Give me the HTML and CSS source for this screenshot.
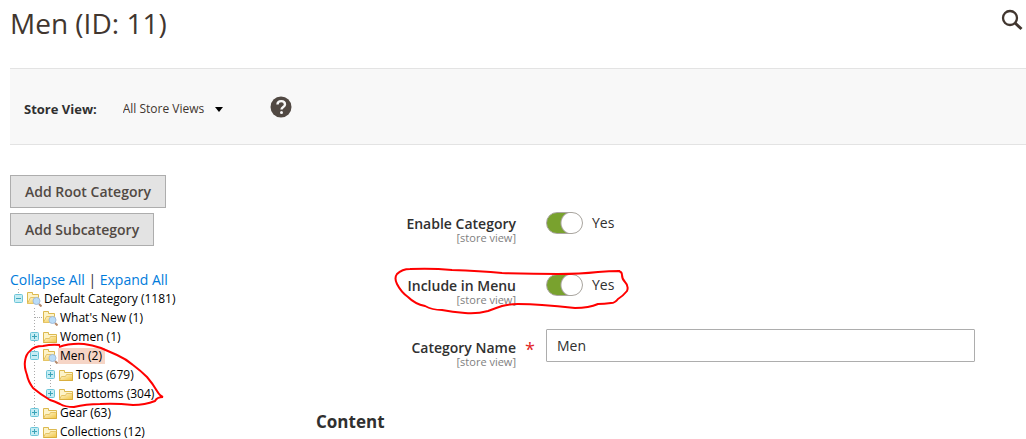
FILE: index.html
```html
<!DOCTYPE html>
<html lang="en">
<head>
    <meta charset="UTF-8">
    <meta name="viewport" content="width=device-width, initial-scale=1.0">
    <title>Men (ID: 11) / Categories</title>
    <link rel="stylesheet" href="styles.css">
</head>
<body>
    <!-- Shared icons -->
    <svg class="sprite" aria-hidden="true">
        <defs>
            <linearGradient id="gold" x1="0" y1="0" x2="1" y2="1">
                <stop offset="0" stop-color="#fff8d8"/>
                <stop offset="1" stop-color="#f0c441"/>
            </linearGradient>
            <symbol id="folder" viewBox="0 0 16 16">
                <path d="M1.500 13.500v-10h5v2h8v8z" fill="#fdf3c8" stroke="#dcb94f"/>
                <path d="M1.500 13.500l2-4h4l1-2h6v6z" fill="url(#gold)" stroke="#e6c566"/>
                <path d="M1.500 13.500h13v-6" fill="none" stroke="#d9ae3e"/>
            </symbol>
            <symbol id="folder-search" viewBox="0 0 16 16">
                <path d="M1.500 12.500v-11h5v2h6v9z" fill="#fdf3c8" stroke="#dcb94f"/>
                <path d="M1.500 12.500l3-6h8v6z" fill="url(#gold)" stroke="#e6c566"/>
                <path d="M13 13l2.500 2.500" stroke="#b58a6c" stroke-width="2"/>
                <circle cx="10.500" cy="10" r="3.500" fill="#b9dcf8" stroke="#a3bcd8"/>
            </symbol>
            <symbol id="minus" viewBox="0 0 9 9">
                <rect x="0.500" y="0.500" width="8" height="8" rx="1" fill="#c5ecf3" stroke="#6cc5d8"/>
                <path d="M2 4.500h5" stroke="#3aa3b8"/>
            </symbol>
            <symbol id="plus" viewBox="0 0 9 9">
                <rect x="0.500" y="0.500" width="8" height="8" rx="1" fill="#c5ecf3" stroke="#6cc5d8"/>
                <path d="M2 4.500h5M4.500 2v5" stroke="#3aa3b8"/>
            </symbol>
        </defs>
    </svg>

    <header class="page-header">
        <h1>Men (ID: 11)</h1>
        <button class="search" type="button" aria-label="Search">
            <svg width="22" height="22" viewBox="0 0 22 22" fill="none" stroke="#41362f">
                <circle cx="9" cy="9" r="7" stroke-width="2.300"/>
                <path d="M14 14l6.500 6" stroke-width="3"/>
            </svg>
        </button>
    </header>

    <div class="store-bar">
        <label for="store">Store View:</label>
        <div class="store-switcher">
            <select id="store">
                <option>All Store Views</option>
            </select>
            <svg class="caret" width="8" height="5" viewBox="0 0 8 5"><path d="M0 0h8l-4 5z"/></svg>
        </div>
        <a class="help" href="#" aria-label="Help">
            <svg width="22" height="22" viewBox="0 0 22 22">
                <circle cx="11" cy="11" r="10.500" fill="#514943"/>
                <path d="M7.500 8.500c0-4.500 7.500-4.500 7.500 0c0 2.500-3.500 2.500-3.500 5" fill="none" stroke="#f8f8f8" stroke-width="2.400"/>
                <circle cx="11.500" cy="16.500" r="1.500" fill="#f8f8f8"/>
            </svg>
        </a>
    </div>

    <main class="content">
        <aside class="sidebar">
            <button class="button" type="button">Add Root Category</button>
            <button class="button" type="button">Add Subcategory</button>

            <div class="tree-actions">
                <a href="#">Collapse All</a> | <a href="#">Expand All</a>
            </div>

            <div class="tree">
                <div class="node root">
                    <svg class="toggle"><use href="#minus"/></svg>
                    <svg class="icon"><use href="#folder-search"/></svg>
                    <a href="#">Default Category (1181)</a>
                </div>
                <div class="children">
                    <div class="node leaf">
                        <svg class="icon"><use href="#folder-search"/></svg>
                        <a href="#">What's New (1)</a>
                    </div>
                    <div class="node">
                        <svg class="toggle"><use href="#plus"/></svg>
                        <svg class="icon"><use href="#folder"/></svg>
                        <a href="#">Women (1)</a>
                    </div>
                    <div class="node">
                        <svg class="toggle"><use href="#minus"/></svg>
                        <svg class="icon"><use href="#folder-search"/></svg>
                        <a class="selected" href="#">Men (2)</a>
                    </div>
                    <div class="children">
                        <div class="node">
                            <svg class="toggle"><use href="#plus"/></svg>
                            <svg class="icon"><use href="#folder"/></svg>
                            <a href="#">Tops (679)</a>
                        </div>
                        <div class="node">
                            <svg class="toggle"><use href="#plus"/></svg>
                            <svg class="icon"><use href="#folder"/></svg>
                            <a href="#">Bottoms (304)</a>
                        </div>
                    </div>
                    <div class="node">
                        <svg class="toggle"><use href="#plus"/></svg>
                        <svg class="icon"><use href="#folder"/></svg>
                        <a href="#">Gear (63)</a>
                    </div>
                    <div class="node">
                        <svg class="toggle"><use href="#plus"/></svg>
                        <svg class="icon"><use href="#folder"/></svg>
                        <a href="#">Collections (12)</a>
                    </div>
                </div>
                <svg class="mark mark-tree" viewBox="20 340 150 70" aria-hidden="true">
                    <path d="M59 347Q70 343 84 344Q92 345 101 348L117 355Q126 359 133 365Q141 371 147 377Q153 384 157 391Q160 396 163 397Q157 397 155 401Q145 405 133 405Q115 403 100 404Q86 404 74 407Q65 407 60 404Q54 401 50 400Q40 394 33 388Q28 381 27 375Q24 367 25 361Q26 354 30 351Q34 346 43 346Q52 344 60 345"/>
                </svg>
            </div>
        </aside>

        <form class="form">
            <div class="field">
                <label for="enable">Enable Category<small>[store view]</small></label>
                <div class="control">
                    <input class="switch" id="enable" type="checkbox" checked>
                    <span>Yes</span>
                </div>
            </div>
            <div class="field">
                <label for="menu">Include in Menu<small>[store view]</small></label>
                <div class="control">
                    <input class="switch" id="menu" type="checkbox" checked>
                    <span>Yes</span>
                </div>
                <svg class="mark mark-field" viewBox="390 265 245 52" aria-hidden="true">
                    <path d="M617 271Q622 271 622 275Q622 279 625 282Q629 286 627 291Q623 296 618 299Q615 303 611 303Q604 304 598 304Q589 308 575 308Q557 306 542 305Q530 304 518 304Q508 304 502 306Q496 308 488 311Q477 314 465 313Q452 312 442 310Q432 310 425 306Q415 304 408 297Q401 292 397 284Q394 278 397 274Q402 269 410 269Q432 268 452 270Q480 271 502 273Q532 274 558 274Q580 274 598 272Q609 271 620 271"/>
                </svg>
            </div>
            <div class="field required">
                <label for="name">Category Name<small>[store view]</small></label>
                <div class="control">
                    <input class="text" id="name" type="text" value="Men">
                </div>
            </div>
            <h2>Content</h2>
        </form>
    </main>
</body>
</html>
```

FILE: styles.css
```css
* {
    box-sizing: border-box;
}
body {
    margin: 0;
    font-family: "Open Sans", "Noto Sans", sans-serif;
    font-size: 14px;
    line-height: 20px;
    color: #303030;
    background: #fff;
}
button, input, select {
    font: inherit;
}
a {
    color: #007bdb;
    text-decoration: none;
}
svg {
    display: block;
}
.sprite {
    position: absolute;
    width: 0;
    height: 0;
}

/* Header */
.page-header {
    display: flex;
    align-items: flex-start;
    justify-content: space-between;
    height: 68px;
    padding: 3px 3px 0 10px;
}
.page-header h1 {
    margin: 0;
    font-size: 28px;
    font-weight: 400;
    line-height: 40px;
    color: #41362f;
}
.search {
    margin-top: 6px;
    padding: 0;
    border: none;
    background: none;
    cursor: pointer;
}

/* Store view bar */
.store-bar {
    display: flex;
    align-items: center;
    height: 77px;
    margin-left: 10px;
    padding: 4px 14px 0;
    border-top: 1px solid #e3e3e3;
    border-bottom: 1px solid #e3e3e3;
    background: #f8f8f8;
}
.store-bar label {
    font-size: 13px;
    font-weight: 700;
}
.store-switcher {
    position: relative;
    margin-left: 26px;
}
.store-switcher select {
    padding: 0 18px 0 0;
    border: none;
    background: none;
    appearance: none;
    font-size: 12px;
    color: #41362f;
}
.caret {
    position: absolute;
    top: 9px;
    right: 0;
    pointer-events: none;
}
.help {
    margin: 0 0 4px 47px;
}

/* Columns */
.content {
    display: flex;
    padding: 30px 51px 0 10px;
}
.sidebar {
    flex: 0 0 306px;
}
.button {
    display: block;
    height: 33px;
    margin-bottom: 5px;
    padding: 0 14px;
    border: 1px solid #adadad;
    background: #e3e3e3;
    font-weight: 600;
    color: #514943;
    cursor: pointer;
}
.tree-actions {
    margin-top: 25px;
    line-height: 18px;
}

/* Category tree */
.tree {
    position: relative;
    font-size: 12px;
    line-height: 16px;
}
.node {
    display: flex;
    align-items: center;
    height: 19px;
    padding-left: 4px;
}
.node a {
    padding: 0 3px 0 2px;
    color: #000;
}
.node a.selected {
    background: #f6d5c6;
}
.toggle {
    width: 9px;
    height: 9px;
    margin-right: 3px;
}
.icon {
    width: 16px;
    height: 16px;
}
.root {
    background: repeating-linear-gradient(#aaa 0 1px, transparent 1px 3px) 8px 0 / 1px 5px no-repeat;
}
.leaf::before {
    content: "";
    width: 8px;
    margin: 0 0 0 4px;
    border-top: 1px dotted #aaa;
}
.children {
    padding-left: 16px;
    background: repeating-linear-gradient(#aaa 0 1px, transparent 1px 3px) 24px 0 / 1px calc(100% - 10px) no-repeat;
}

/* Form */
.form {
    flex: 1;
    padding-top: 30px;
}
.field {
    position: relative;
    display: grid;
    grid-template-columns: 200px 1fr;
    column-gap: 30px;
    height: 33px;
    margin-bottom: 29px;
}
.field label {
    padding-top: 11px;
    font-weight: 600;
    line-height: 16px;
    text-align: right;
}
.field small {
    display: block;
    font-size: 11px;
    font-weight: 400;
    line-height: 12px;
    color: #808080;
}
.control {
    display: flex;
    align-items: center;
    gap: 9px;
    height: 36px;
}
.required .control {
    height: 33px;
}
.required label::after {
    content: "*";
    position: absolute;
    top: 12px;
    left: 209px;
    font-size: 18px;
    font-weight: 400;
    color: #e22626;
}
.switch {
    width: 37px;
    height: 22px;
    margin: 0;
    border: 1px solid #aaa6a0;
    border-radius: 11px;
    background: radial-gradient(circle at 25px 10px, #fff 10px, #aaa6a0 11px, #79a22e 12px);
    appearance: none;
}
.text {
    width: 100%;
    height: 33px;
    padding: 0 10px;
    border: 1px solid #adadad;
    border-radius: 1px;
    color: #303030;
}
.form h2 {
    margin: 50px 0 0;
    font-size: 17px;
    font-weight: 700;
    line-height: 20px;
}

/* Red pen marks */
.mark {
    position: absolute;
    fill: none;
    stroke: #f00;
    stroke-width: 2;
    pointer-events: none;
}
.mark-tree {
    top: 51px;
    left: 10px;
    width: 150px;
    height: 70px;
}
.mark-field {
    top: -2px;
    left: 74px;
    width: 245px;
    height: 52px;
}
```
